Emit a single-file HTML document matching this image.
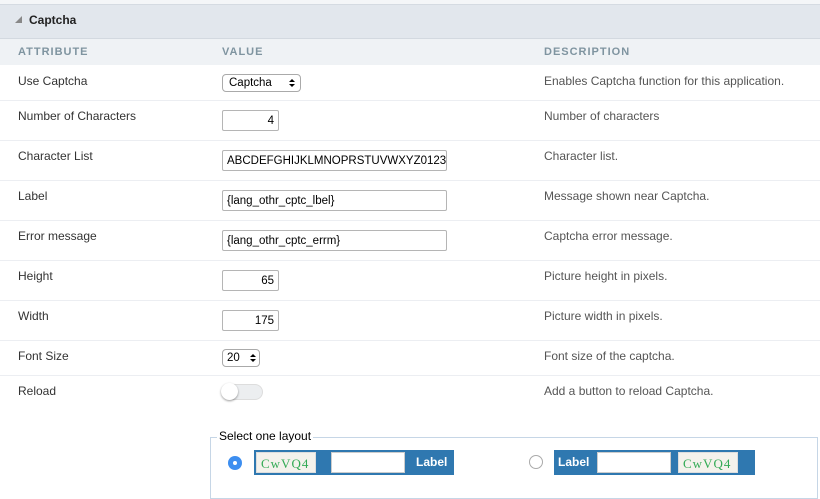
<!DOCTYPE html>
<html><head><style>
body{margin:0;width:820px;height:484px;overflow:hidden;background:#fff;font-family:"Liberation Sans",sans-serif;font-size:12px;color:#333;position:relative}
.a{position:absolute}
.row{position:absolute;left:0;width:820px;border-bottom:1px solid #eceef2}
.lab{position:absolute;left:18px;font-size:12px;color:#333}
.desc{position:absolute;left:544px;color:#555}
.inp{position:absolute;left:222px;height:21px;border:1px solid #b5b5b5;border-radius:2px;box-sizing:border-box;font-size:11.5px;line-height:20px;padding:0 4px;background:#fff;color:#000;overflow:hidden;white-space:nowrap}
.sel{position:absolute;left:222px;height:18px;border:1px solid #aaa;border-radius:4px;box-sizing:border-box;font-size:11.5px;line-height:16px;padding:0 6px;background:#fff;color:#000}
.arr{position:absolute;top:4px;width:0;height:0}
.arr:before{content:"";position:absolute;left:-3px;top:0;border-left:3px solid transparent;border-right:3px solid transparent;border-bottom:3px solid #000}
.arr:after{content:"";position:absolute;left:-3px;top:5px;border-left:3px solid transparent;border-right:3px solid transparent;border-top:3px solid #000}
.cap{position:absolute;width:60px;height:21px;background:#f4f2ec;border:1px solid #ddd;box-sizing:border-box;font-family:"Liberation Serif",serif;font-size:13px;color:#3a5;line-height:22px;padding-left:4px;letter-spacing:1px}
.blue{position:absolute;height:25px;background:#2f78b0}
.wb{position:absolute;top:2px;width:74px;height:21px;background:#fff;border:1px solid #ccc;box-sizing:border-box}
.bl{position:absolute;top:5px;color:#fff;font-weight:bold;font-size:12px}
</style></head><body>
<div class="a" style="left:0;top:0;width:820px;height:4px;background:#f4f6f8"></div>
<div class="a" style="left:0;top:4px;width:820px;height:33px;background:#e2e7ed;border-top:1px solid #d5dbe2;border-bottom:2px solid #d3d9e0"></div>
<div class="a" style="left:15px;top:16px;width:0;height:0;border-left:7px solid transparent;border-bottom:7px solid #888"></div>
<div class="a" style="left:29px;top:13px;font-weight:bold;font-size:12px;color:#222">Captcha</div>
<div class="a" style="left:0;top:39px;width:820px;height:26px;background:#eff2f5"></div>
<div class="a" style="left:18px;top:46px;font-size:11px;letter-spacing:1px;color:#7f94a0;font-weight:bold">ATTRIBUTE</div>
<div class="a" style="left:222px;top:46px;font-size:11px;letter-spacing:1px;color:#7f94a0;font-weight:bold">VALUE</div>
<div class="a" style="left:544px;top:46px;font-size:11px;letter-spacing:1px;color:#7f94a0;font-weight:bold">DESCRIPTION</div>

<div class="row" style="top:65px;height:35px"></div>
<div class="row" style="top:100px;height:40px"></div>
<div class="row" style="top:140px;height:40px"></div>
<div class="row" style="top:180px;height:40px"></div>
<div class="row" style="top:220px;height:40px"></div>
<div class="row" style="top:260px;height:40px"></div>
<div class="row" style="top:300px;height:40px"></div>
<div class="row" style="top:340px;height:35px"></div>

<div class="lab" style="top:74px">Use Captcha</div>
<div class="sel" style="top:74px;width:79px">Captcha<span class="arr" style="left:69px"></span></div>
<div class="desc" style="top:74px">Enables Captcha function for this application.</div>

<div class="lab" style="top:109px">Number of Characters</div>
<div class="inp" style="top:110px;width:57px;text-align:right">4</div>
<div class="desc" style="top:109px">Number of characters</div>

<div class="lab" style="top:149px">Character List</div>
<div class="inp" style="top:150px;width:225px">ABCDEFGHIJKLMNOPRSTUVWXYZ01234</div>
<div class="desc" style="top:149px">Character list.</div>

<div class="lab" style="top:189px">Label</div>
<div class="inp" style="top:190px;width:225px">{lang_othr_cptc_lbel}</div>
<div class="desc" style="top:189px">Message shown near Captcha.</div>

<div class="lab" style="top:229px">Error message</div>
<div class="inp" style="top:230px;width:225px">{lang_othr_cptc_errm}</div>
<div class="desc" style="top:229px">Captcha error message.</div>

<div class="lab" style="top:269px">Height</div>
<div class="inp" style="top:270px;width:57px;text-align:right">65</div>
<div class="desc" style="top:269px">Picture height in pixels.</div>

<div class="lab" style="top:309px">Width</div>
<div class="inp" style="top:310px;width:57px;text-align:right">175</div>
<div class="desc" style="top:309px">Picture width in pixels.</div>

<div class="lab" style="top:349px">Font Size</div>
<div class="sel" style="top:349px;width:38px;padding:0 4px">20<span class="arr" style="left:30px"></span></div>
<div class="desc" style="top:349px">Font size of the captcha.</div>

<div class="lab" style="top:384px">Reload</div>
<div class="a" style="left:222px;top:384px;width:41px;height:16px;border-radius:9px;background:#eceef0;border:1px solid #ddd;box-sizing:border-box"></div>
<div class="a" style="left:221px;top:383px;width:17px;height:17px;border-radius:50%;background:#fff;box-shadow:0 1px 2px rgba(0,0,0,.4)"></div>
<div class="desc" style="top:384px">Add a button to reload Captcha.</div>

<div class="a" style="left:210px;top:437px;width:606px;height:60px;border:1px solid #c6d6e6"></div>
<div class="a" style="left:217px;top:429px;background:#fff;padding:0 2px;color:#000;font-size:12px">Select one layout</div>
<div class="a" style="left:228px;top:456px;width:14px;height:14px;border-radius:50%;background:#3d8ef0"></div>
<div class="a" style="left:233px;top:461px;width:4px;height:4px;border-radius:50%;background:#fff"></div>
<div class="blue" style="left:254px;top:450px;width:200px">
<div class="cap" style="left:2px;top:2px">CwVQ4</div>
<div class="wb" style="left:77px"></div><div class="bl" style="left:162px">Label</div></div>
<div class="a" style="left:529px;top:455px;width:14px;height:14px;border-radius:50%;border:1px solid #aaa;box-sizing:border-box;background:#fff"></div>
<div class="blue" style="left:554px;top:450px;width:201px">
<div class="bl" style="left:4px">Label</div><div class="wb" style="left:43px"></div>
<div class="cap" style="left:124px;top:2px">CwVQ4</div></div>
</body></html>
